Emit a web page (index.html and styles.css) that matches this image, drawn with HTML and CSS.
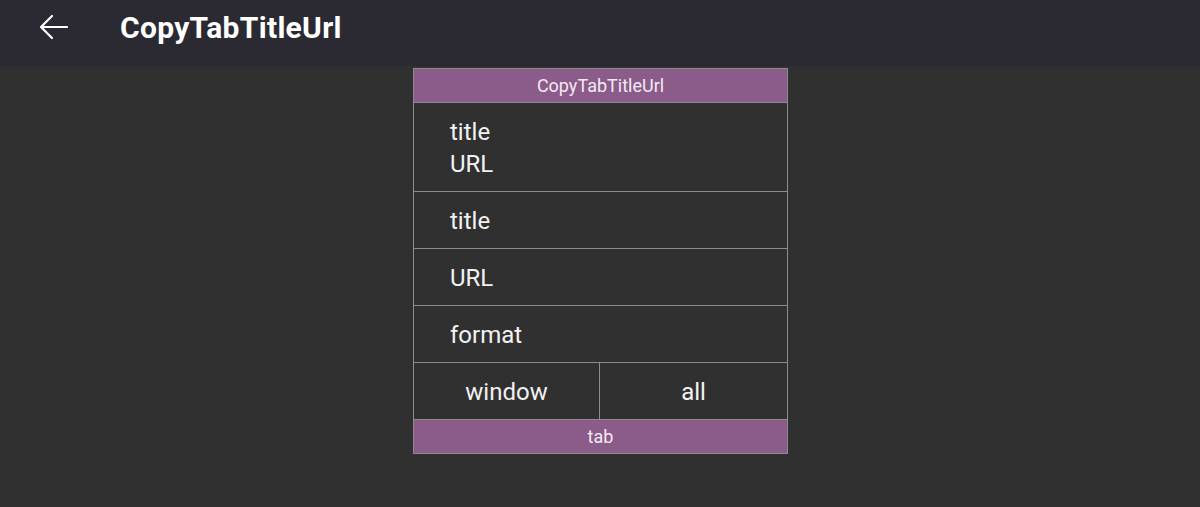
FILE: index.html
```html
<!DOCTYPE html>
<html>
<head>
<meta charset="utf-8">
<link rel="stylesheet" href="styles.css">
</head>
<body>
<header class="appbar">
  <svg class="back" width="30" height="26" viewBox="0 0 30 26">
    <path d="M28 13 H3 M13 2 L2 13 L13 24" fill="none" stroke="#ffffff" stroke-width="2.2" stroke-linecap="round" stroke-linejoin="round"/>
  </svg>
  <h1 class="title">CopyTabTitleUrl</h1>
</header>
<main class="content">
  <div class="panel">
    <div class="bar">CopyTabTitleUrl</div>
    <div class="row tall"><div>title</div><div>URL</div></div>
    <div class="row">title</div>
    <div class="row">URL</div>
    <div class="row">format</div>
    <div class="row split">
      <div class="cell">window</div>
      <div class="cell">all</div>
    </div>
    <div class="bar foot">tab</div>
  </div>
</main>
</body>
</html>
```
FILE: styles.css
```css
html, body {
  margin: 0;
  padding: 0;
  background: #303030;
  font-family: Roboto, "Noto Sans", sans-serif;
  color: #f2f2f2;
}
.appbar {
  height: 66px;
  background: #2b2a33;
  display: flex;
  align-items: center;
}
.back {
  margin-left: 39px;
  margin-top: -13px;
}
.title {
  margin: -12px 0 0 51px;
  font-size: 30px;
  font-weight: 700;
  color: #ffffff;
  letter-spacing: 0.3px;
}
.content {
  display: flex;
  justify-content: center;
  padding-top: 2px;
}
.panel {
  width: 373px;
  margin-left: 1px;
  border: 1px solid #8c8c8c;
  display: flex;
  flex-direction: column;
}
.bar {
  height: 33px;
  background: #8b5b8a;
  border-bottom: 1px solid #8c8c8c;
  display: flex;
  align-items: center;
  justify-content: center;
  font-size: 18px;
  color: #f3eaf3;
}
.bar.foot {
  border-bottom: none;
}
.row {
  box-sizing: border-box;
  height: 57px;
  border-bottom: 1px solid #8c8c8c;
  display: flex;
  flex-direction: column;
  justify-content: center;
  padding: 2px 0 0 36px;
  font-size: 24px;
  line-height: 32px;
}
.row.tall {
  height: 89px;
}
.row.split {
  flex-direction: row;
  padding: 0;
  align-items: stretch;
}
.cell {
  flex: 1;
  display: flex;
  align-items: center;
  justify-content: center;
  padding-top: 2px;
}
.cell:first-child {
  border-right: 1px solid #8c8c8c;
  flex: 0 0 185px;
}
```
